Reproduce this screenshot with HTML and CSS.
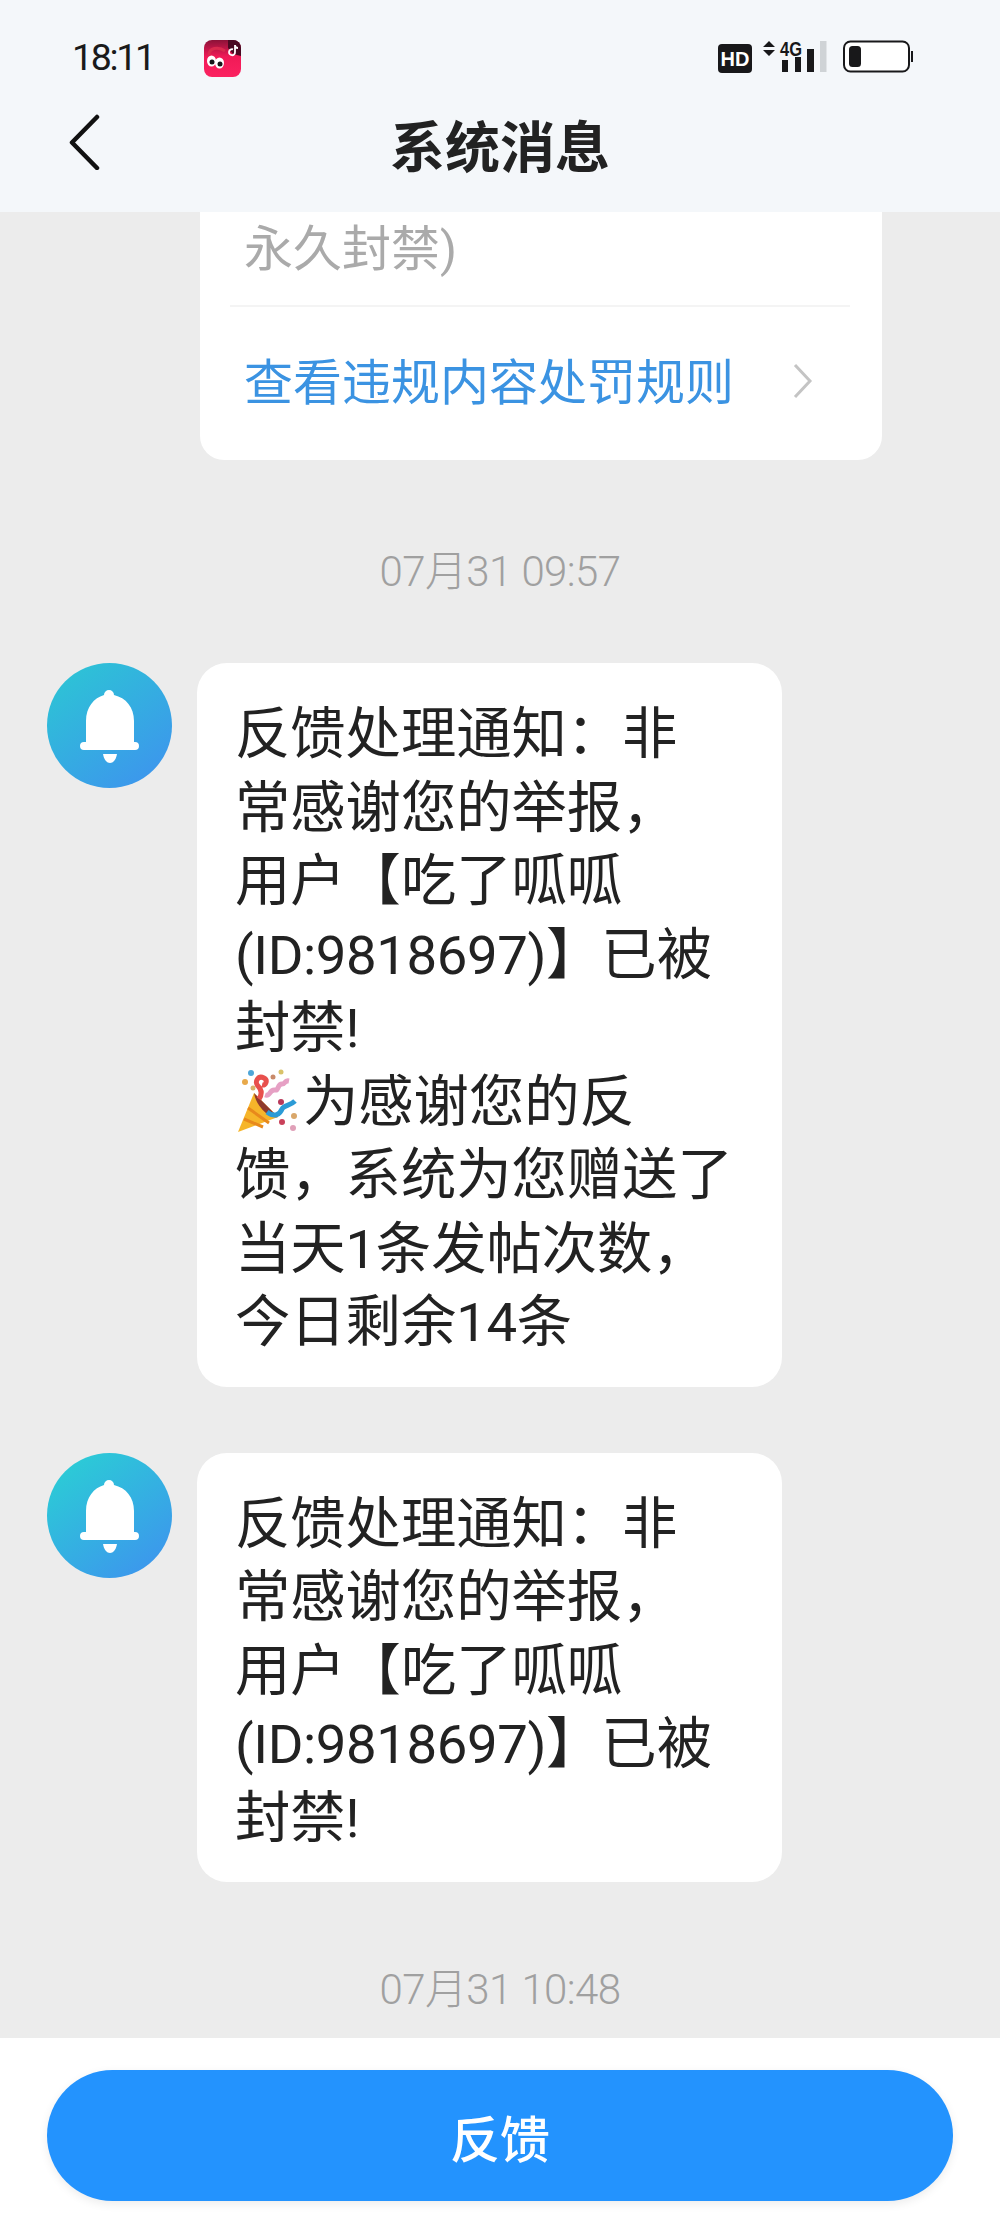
FILE: index.html
```html
<!DOCTYPE html>
<html lang="zh">
<head>
<meta charset="utf-8">
<title>系统消息</title>
<link rel="stylesheet" href="styles.css">
</head>
<body>
<div class="phone">
  <header class="top">
    <div class="status">
      <div class="status-left">
        <span class="clock">18:11</span>
        <svg class="app-icon" viewBox="0 0 37 37"><defs><linearGradient id="ag" x1="0" y1="0" x2="0" y2="1"><stop offset="0" stop-color="#8c1238"/><stop offset=".45" stop-color="#f01a57"/><stop offset="1" stop-color="#fb2260"/></linearGradient></defs><rect width="37" height="37" rx="8" fill="url(#ag)"/><path d="M24 0h5a8 8 0 0 1 8 8v8l-8-2-5-6z" fill="#4a0a22"/><path d="M5 15c0-7 9-9 16-4" fill="none" stroke="#d92a4e" stroke-width="3"/><ellipse cx="7.500" cy="21" rx="4.500" ry="5.500" fill="#fff"/><ellipse cx="15.500" cy="23" rx="4.500" ry="5.500" fill="#fff"/><circle cx="8" cy="22" r="2.500" fill="#15151a"/><circle cx="16" cy="24" r="2.500" fill="#15151a"/><path d="M31 5v7a3 3 0 1 1-2-2.600M31 5c0 2 1.500 3 3 3" fill="none" stroke="#fff" stroke-width="1.800"/></svg>
      </div>
      <div class="status-right">
        <svg class="hd" viewBox="0 0 34 29"><rect width="34" height="29" rx="4" fill="#18181a"/><text x="17" y="22" text-anchor="middle" class="hd-text">HD</text></svg>
        <svg class="signal" viewBox="0 0 64 33"><path d="M0 7l6-6 6 6zM0 10l6 6 6-6z" fill="#18181a"/><text x="17" y="15.500" class="net-text" textLength="22" lengthAdjust="spacingAndGlyphs">4G</text><rect x="19" y="20" width="6" height="12" fill="#18181a"/><rect x="32" y="17" width="6" height="15" fill="#18181a"/><rect x="44" y="9" width="7" height="23" fill="#18181a"/><rect x="57" y="1" width="6.500" height="31" fill="#cfd3d6"/></svg>
        <svg class="battery" viewBox="0 0 70 33"><rect x="1" y="1.500" width="65" height="30" rx="6.500" fill="#fff" stroke="#18181a" stroke-width="2"/><rect x="6" y="6" width="12" height="21" rx="3.500" fill="#18181a"/><rect x="68" y="11" width="2" height="11" fill="#18181a"/></svg>
      </div>
    </div>
    <div class="nav">
      <svg class="back" viewBox="0 0 32 56"><path d="M29 3L4 28.500 29 54" fill="none" stroke="#111" stroke-width="4.500" stroke-linecap="round" stroke-linejoin="round"/></svg>
      <h1 class="title">系统消息</h1>
    </div>
  </header>

  <main class="feed">
    <section class="notice">
      <p class="notice-text">永久封禁)</p>
      <div class="notice-link">
        <span>查看违规内容处罚规则</span>
        <svg class="chev" viewBox="0 0 20 36"><path d="M2 2l15 16L2 34" fill="none" stroke="#c4c4c4" stroke-width="3"/></svg>
      </div>
    </section>

    <time class="stamp stamp-a">07月31 09:57</time>

    <article class="msg">
      <svg class="avatar" viewBox="0 0 125 125"><defs><linearGradient id="bg1" x1=".1" y1="0" x2=".85" y2="1"><stop offset="0" stop-color="#2cc6d4"/><stop offset="1" stop-color="#3d94ee"/></linearGradient></defs><circle cx="62.500" cy="62.500" r="62.500" fill="url(#bg1)"/><path d="M62 27a5 5 0 0 1 5 5c12 3 20 12 20 26v21h1a4 4 0 0 1 0 8H37a4 4 0 0 1 0-8h2V58c0-14 8-23 18-26a5 5 0 0 1 5-5z" fill="#fff"/><path d="M56 91h14c-1 6-4 9-7 9s-6-3-7-9z" fill="#fff"/></svg>
      <div class="bubble">反馈处理通知：非<br>常感谢您的举报，<br>用户【吃了呱呱<br><span class="latin">(ID:9818697)</span>】已被<br>封禁<span class="latin">!</span><br><svg class="party" viewBox="0 0 64 64"><path d="M1 63L17 24l24 24z" fill="#f6b52a"/><path d="M7 50l19 8M11 39l21 15" stroke="#e8891c" stroke-width="3" fill="none"/><path d="M17 24l24 24c-9 2-22-11-24-24z" fill="#8f3a2c"/><path d="M22 30c4-6 2-10-1-13-4-4 0-11 6-8 4 2 2 8-2 7" fill="none" stroke="#e8504d" stroke-width="5"/><path d="M28 26c6 2 4-6 10-5 4 1 2-6 7-6 4 0 2-4 7-3" fill="none" stroke="#e6a0c4" stroke-width="5"/><path d="M30 43c8 6 13 2 15-3 2-4 8-3 13-8" fill="none" stroke="#2c9bd6" stroke-width="5"/><circle cx="8" cy="13" r="3" fill="#e8a94a"/><circle cx="14" cy="4" r="3" fill="#4ea6d8"/><circle cx="16" cy="19" r="2.500" fill="#d9b36a"/><circle cx="36" cy="8" r="2.500" fill="#c98a6a"/><circle cx="44" cy="3" r="2.500" fill="#d9c26a"/><circle cx="44" cy="33" r="3" fill="#b8395a"/><circle cx="45" cy="53" r="3" fill="#c9415a"/><circle cx="57" cy="47" r="3" fill="#d9a76a"/><circle cx="56" cy="59" r="3" fill="#e0a0b8"/></svg>为感谢您的反<br>馈，系统为您赠送了<br>当天<span class="latin">1</span>条发帖次数，<br>今日剩余<span class="latin">14</span>条</div>
    </article>

    <article class="msg msg-b">
      <svg class="avatar" viewBox="0 0 125 125"><defs><linearGradient id="bg2" x1=".1" y1="0" x2=".85" y2="1"><stop offset="0" stop-color="#2ad0d4"/><stop offset="1" stop-color="#3d94ee"/></linearGradient></defs><circle cx="62.500" cy="62.500" r="62.500" fill="url(#bg2)"/><path d="M62 27a5 5 0 0 1 5 5c12 3 20 12 20 26v21h1a4 4 0 0 1 0 8H37a4 4 0 0 1 0-8h2V58c0-14 8-23 18-26a5 5 0 0 1 5-5z" fill="#fff"/><path d="M56 91h14c-1 6-4 9-7 9s-6-3-7-9z" fill="#fff"/></svg>
      <div class="bubble">反馈处理通知：非<br>常感谢您的举报，<br>用户【吃了呱呱<br><span class="latin">(ID:9818697)</span>】已被<br>封禁<span class="latin">!</span></div>
    </article>

    <time class="stamp stamp-b">07月31 10:48</time>
  </main>

  <footer class="foot">
    <button class="feedback">反馈</button>
  </footer>
</div>
</body>
</html>
```

FILE: styles.css
```css
* { box-sizing: border-box; }
html, body { margin: 0; padding: 0; }
body { font-family: Roboto, "Noto Sans CJK SC", sans-serif; background: #ececec; }
.phone { width: 1000px; height: 2233px; display: flex; flex-direction: column; overflow: hidden; }

.top { height: 212px; background: #f4f7fa; flex: none; }
.status { height: 108px; display: flex; justify-content: space-between; align-items: center; padding: 5px 87px 0 72px; }
.status-left { display: flex; align-items: center; gap: 50px; }
.clock { font-size: 37.500px; letter-spacing: -2.300px; color: #1a1a1a; }
.app-icon { width: 37px; height: 37px; display: block; margin-top: 3px; }
.status-right { display: flex; align-items: center; }
.hd { width: 34px; height: 29px; margin-right: 11px; margin-top: 3px; }
.hd-text { font: 700 20px "Liberation Sans", sans-serif; fill: #fff; }
.signal { width: 64px; height: 33px; margin-right: 16px; overflow: visible; }
.net-text { font: 700 20px "Liberation Sans", sans-serif; fill: #18181a; }
.battery { width: 70px; height: 33px; }

.nav { height: 104px; position: relative; display: flex; align-items: center; justify-content: center; margin-top: -8px; }
.back { position: absolute; left: 68px; top: 14px; width: 32px; height: 56px; }
.title { margin: 0 0 19px; font-size: 55px; font-weight: 700; color: #222; }

.feed { flex: 1; min-height: 0; display: flex; flex-direction: column; }
.notice { width: 682px; margin-left: 200px; height: 248px; background: #fff; border-radius: 0 0 24px 24px; padding: 0 33px 0 32px; flex: none; display: flex; flex-direction: column; }
.notice-text { margin: 0 -1px 0 -2px; padding: 0 0 0 14px; height: 95px; border-bottom: 2px solid #f4f4f4; font-size: 49px; line-height: 76px; color: #aaa; }
.notice-link { flex: 1; display: flex; justify-content: space-between; align-items: center; padding: 0 0 10px 12px; font-size: 49px; color: #3b93e2; }
.chev { width: 20px; height: 36px; margin: 4px 36px 0 0; }

.stamp { display: block; text-align: center; font-size: 42px; font-weight: 300; letter-spacing: -.600px; line-height: 44px; color: #a0a0a0; }
.stamp-a { margin-top: 90px; }
.stamp-b { margin-top: 86px; }

.msg { display: flex; align-items: flex-start; gap: 25px; padding-left: 47px; margin-top: 69px; }
.msg-b { margin-top: 66px; }
.avatar { width: 125px; height: 125px; flex: none; }
.bubble { width: 585px; background: #fff; border-radius: 30px; padding: 35px 20px 27px 38px; font-size: 55.300px; line-height: 73.500px; color: #222; }
.latin { font-size: 54.500px; letter-spacing: -.400px; }
.party { width: 64px; height: 64px; vertical-align: 0; margin: -12px 2px -12px 2px; }

.foot { height: 195px; flex: none; background: #fff; padding: 32px 47px 0; }
.feedback { display: block; width: 906px; height: 131px; border: 0; border-radius: 66px; background: #2393fe; color: #fff; font: 500 50px Roboto, "Noto Sans CJK SC", sans-serif; box-shadow: 0 3px 10px rgba(0, 0, 0, .08); }
```
